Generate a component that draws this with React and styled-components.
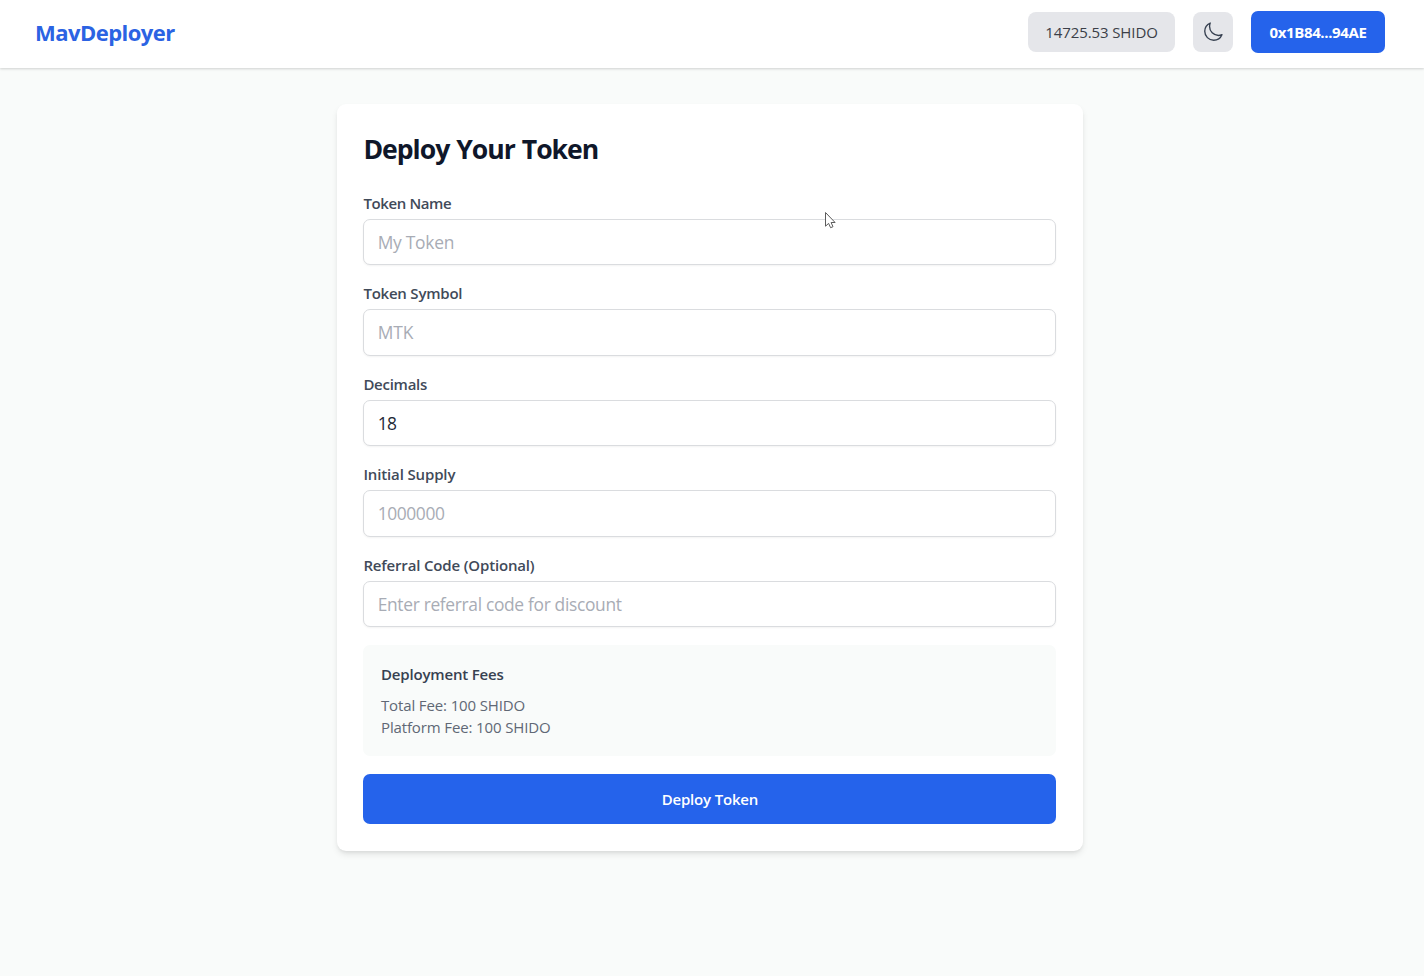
import React from "react";
import styled, { createGlobalStyle } from "styled-components";

const GlobalStyle = createGlobalStyle`
  *, *::before, *::after { box-sizing: border-box; }
  html, body { margin: 0; padding: 0; }
  body {
    background: #f9fbfa;
    color: #111827;
    font-family: "Open Sans", "Noto Sans", sans-serif;
    overflow: hidden;
  }
  button, input { font-family: inherit; }
`;

const Page = styled.div`
  position: relative;
  min-height: 976px;
  background: #f9fbfa;
`;

const Header = styled.header`
  display: flex;
  align-items: center;
  justify-content: space-between;
  height: 68px;
  padding: 0 39px 4px 35px;
  background: #fff;
  box-shadow: 0 1px 3px rgba(0, 0, 0, 0.1), 0 1px 2px rgba(0, 0, 0, 0.08);
`;

const Brand = styled.div`
  font-size: 22px;
  line-height: 32px;
  font-weight: 700;
  letter-spacing: -0.53px;
  padding-bottom: 1px;
  color: #2b63e3;
`;

const HeaderActions = styled.div`
  display: flex;
  align-items: center;
  gap: 18px;
`;

const Balance = styled.div`
  width: 147px;
  height: 40px;
  border-radius: 8px;
  background: #e5e6ea;
  color: #3b3f48;
  font-size: 15px;
  line-height: 40px;
  letter-spacing: -0.1px;
  text-align: center;
`;

const ThemeToggle = styled.button`
  display: flex;
  align-items: center;
  justify-content: center;
  width: 40px;
  height: 40px;
  padding: 0;
  border: 0;
  border-radius: 8px;
  background: #e5e6ea;
  color: #374151;
`;

const Button = styled.button`
  display: block;
  width: ${(p) => p.$width};
  height: ${(p) => p.$height};
  padding: 0;
  border: 0;
  border-radius: 7px;
  background: #2563eb;
  color: #fff;
  font-size: 15px;
  font-weight: ${(p) => p.$weight};
  letter-spacing: ${(p) => p.$tracking};
  text-align: center;
`;

const Main = styled.main`
  display: flex;
  justify-content: center;
  padding: 35.5px 4px 0 0;
`;

const Card = styled.section`
  width: 746px;
  padding: 26.5px 26.6px 27px 26.4px;
  border-radius: 9px;
  background: #fff;
  box-shadow: 0 4px 7px -1px rgba(0, 0, 0, 0.1), 0 2px 4px -2px rgba(0, 0, 0, 0.1);
`;

const Title = styled.h1`
  margin: 0 0 23.8px;
  font-size: 26.6px;
  line-height: 38px;
  font-weight: 700;
  letter-spacing: -1px;
  word-spacing: 1px;
  color: #0f172a;
`;

const Form = styled.form`
  display: flex;
  flex-direction: column;
`;

const Field = styled.div`
  display: flex;
  flex-direction: column;
  gap: 5px;
  margin-bottom: 17.1px;
`;

const Label = styled.label`
  font-size: 15px;
  line-height: 22px;
  font-weight: 600;
  letter-spacing: ${(p) => p.$tracking};
  color: #414a59;
`;

const Input = styled.input`
  width: 100%;
  height: 46.4px;
  padding: 0 13.3px;
  border: 1px solid #dadcdf;
  border-radius: 7px;
  outline: none;
  background: #fff;
  box-shadow: 0 1px 2px rgba(0, 0, 0, 0.05);
  color: #1f2937;
  font-size: 17.4px;
  letter-spacing: ${(p) => p.$tracking};

  &::placeholder {
    color: #a8acb5;
    opacity: 1;
  }
`;

const Fees = styled.div`
  height: 111px;
  margin: 0.7px 0 18px;
  padding: 17.6px;
  border-radius: 7px;
  background: #f9fbfa;
`;

const FeesTitle = styled.h2`
  margin: 0 0 9.4px;
  font-size: 15px;
  line-height: 22px;
  font-weight: 600;
  letter-spacing: -0.17px;
  color: #374151;
`;

const FeeLine = styled.p`
  margin: 0;
  font-size: 15px;
  line-height: 22px;
  letter-spacing: -0.13px;
  color: #606875;
`;

const Pointer = styled.svg`
  position: absolute;
  left: 824px;
  top: 211px;
  pointer-events: none;
`;

const fields = [
  { id: "name", label: "Token Name", placeholder: "My Token", labelTracking: "-0.38px", tracking: "-0.26px" },
  { id: "symbol", label: "Token Symbol", placeholder: "MTK", labelTracking: "-0.22px", tracking: "-0.11px" },
  { id: "decimals", label: "Decimals", value: "18", labelTracking: "-0.26px", tracking: "-0.6px" },
  { id: "supply", label: "Initial Supply", placeholder: "1000000", labelTracking: "-0.14px", tracking: "-0.4px" },
  {
    id: "referral",
    label: "Referral Code (Optional)",
    placeholder: "Enter referral code for discount",
    labelTracking: "-0.16px",
    tracking: "-0.33px",
  },
];

function MoonIcon() {
  return (
    <svg width="22" height="22" viewBox="0 0 24 24" fill="none" stroke="currentColor" strokeWidth="1.5" strokeLinecap="round" strokeLinejoin="round">
      <path d="M21.752 15.002A9.72 9.72 0 0 1 18 15.75c-5.385 0-9.75-4.365-9.75-9.75 0-1.33.266-2.597.748-3.752A9.753 9.753 0 0 0 3 11.25C3 16.635 7.365 21 12.75 21a9.753 9.753 0 0 0 9.002-5.998Z" />
    </svg>
  );
}

export default function App() {
  return (
    <Page>
      <GlobalStyle />
      <Header>
        <Brand>MavDeployer</Brand>
        <HeaderActions>
          <Balance>14725.53 SHIDO</Balance>
          <ThemeToggle type="button" aria-label="Toggle theme">
            <MoonIcon />
          </ThemeToggle>
          <Button type="button" $width="134px" $height="42px" $weight={700} $tracking="-0.37px">
            0x1B84...94AE
          </Button>
        </HeaderActions>
      </Header>
      <Main>
        <Card>
          <Title>Deploy Your Token</Title>
          <Form>
            {fields.map((f) => (
              <Field key={f.id}>
                <Label htmlFor={f.id} $tracking={f.labelTracking}>{f.label}</Label>
                <Input id={f.id} placeholder={f.placeholder} defaultValue={f.value} $tracking={f.tracking} />
              </Field>
            ))}
            <Fees>
              <FeesTitle>Deployment Fees</FeesTitle>
              <FeeLine>Total Fee: 100 SHIDO</FeeLine>
              <FeeLine>Platform Fee: 100 SHIDO</FeeLine>
            </Fees>
            <Button type="button" $width="100%" $height="50px" $weight={600} $tracking="-0.18px">
              Deploy Token
            </Button>
          </Form>
        </Card>
      </Main>
      <Pointer width="13" height="19" viewBox="0 0 13 19">
        <path d="M1.5 1.5V15.2L4.6 12.4L6.6 16.7L9 15.7L7.1 11.5H11.1Z" fill="#fff" stroke="#5c5c5c" strokeWidth="1" strokeLinejoin="round" />
      </Pointer>
    </Page>
  );
}
